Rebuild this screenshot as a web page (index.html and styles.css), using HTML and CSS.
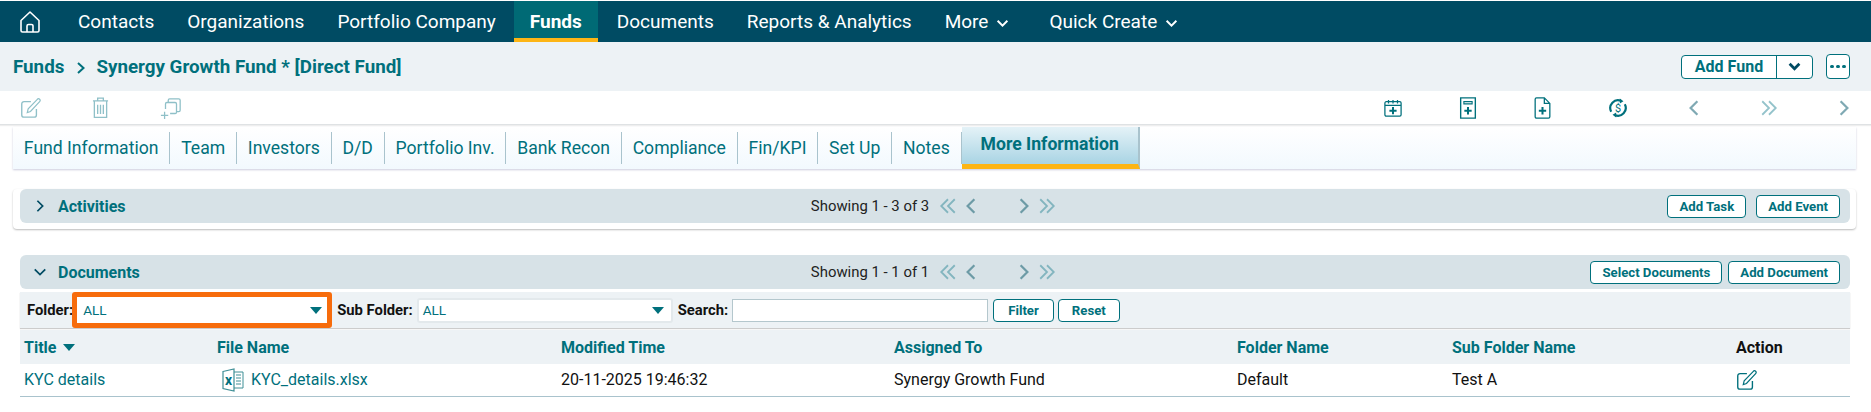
FILE: index.html
```html
<!DOCTYPE html>
<html lang="en">
<head>
<meta charset="utf-8">
<title>Synergy Growth Fund</title>
<link rel="stylesheet" href="styles.css">
</head>
<body>
<svg class="defs" width="0" height="0">
  <symbol id="i-edit" viewBox="0 0 24 24"><path d="M13 5H5.500A2.500 2.500 0 0 0 3 7.500V19.500A2.500 2.500 0 0 0 5.500 22H16.500A2.500 2.500 0 0 0 19 19.500V13" fill="none" stroke="currentColor" stroke-width="1.500"/><path d="M9 17l1-4L20 2.500a1.700 1.700 0 0 1 2.500 2.500L12.500 15.800z" fill="none" stroke="currentColor" stroke-width="1.300"/></symbol>
  <symbol id="i-left" viewBox="0 0 16 16"><path d="M11 2L5 8l6 6" fill="none" stroke="currentColor" stroke-width="2"/></symbol>
  <symbol id="i-right" viewBox="0 0 16 16"><path d="M5 2l6 6-6 6" fill="none" stroke="currentColor" stroke-width="2"/></symbol>
  <symbol id="i-dleft" viewBox="0 0 16 16"><path d="M8 2L2 8l6 6M14 2L8 8l6 6" fill="none" stroke="currentColor" stroke-width="1.600"/></symbol>
  <symbol id="i-dright" viewBox="0 0 16 16"><path d="M2 2l6 6-6 6M8 2l6 6-6 6" fill="none" stroke="currentColor" stroke-width="1.600"/></symbol>
  <symbol id="i-down" viewBox="0 0 12 8"><path d="M1.500 1.500L6 6l4.500-4.500" fill="none" stroke="currentColor" stroke-width="1.800"/></symbol>
</svg>

<nav class="nav">
  <a class="nav-home">
    <svg width="22" height="24" viewBox="0 0 22 24"><path d="M11 2L2 10.500V20.500a1.500 1.500 0 0 0 1.500 1.500h15a1.500 1.500 0 0 0 1.500-1.500V10.500z" fill="none" stroke="#fff" stroke-width="1.600" stroke-linejoin="round"/><path d="M8 22v-6a1.500 1.500 0 0 1 1.500-1.500h3A1.500 1.500 0 0 1 14 16v6" fill="none" stroke="#fff" stroke-width="1.600"/></svg>
  </a>
  <a class="nav-item">Contacts</a>
  <a class="nav-item">Organizations</a>
  <a class="nav-item">Portfolio Company</a>
  <a class="nav-item nav-active">Funds</a>
  <a class="nav-item">Documents</a>
  <a class="nav-item">Reports &amp; Analytics</a>
  <a class="nav-item">More <svg class="nav-caret" width="13" height="9"><use href="#i-down"/></svg></a>
  <a class="nav-item nav-quick">Quick Create <svg class="nav-caret" width="13" height="9"><use href="#i-down"/></svg></a>
</nav>

<header class="crumbs">
  <span class="crumb">Funds</span>
  <svg class="crumb-sep" width="10" height="14" viewBox="0 0 10 14"><path d="M2 2l5.500 5L2 12" fill="none" stroke="currentColor" stroke-width="2"/></svg>
  <span class="crumb">Synergy Growth Fund * [Direct Fund]</span>
  <div class="crumb-actions">
    <div class="split">
      <span class="split-main">Add Fund</span>
      <span class="split-caret"><svg width="13" height="9" viewBox="0 0 12 8"><path d="M1.500 1.500L6 6l4.500-4.500" fill="none" stroke="currentColor" stroke-width="2.600"/></svg></span>
    </div>
    <span class="dots"><i></i><i></i><i></i></span>
  </div>
</header>

<div class="toolbar">
  <div class="tools-left">
    <svg class="tool" width="22" height="22"><use href="#i-edit"/></svg>
    <svg class="tool" width="17" height="23" viewBox="0 0 18 24"><path d="M1 5h16M6 5V2h6v3M2.500 5.500V22.500h13V5.500M6 9v10M9 9v10M12 9v10" fill="none" stroke="currentColor" stroke-width="1.400"/></svg>
    <svg class="tool" width="22" height="22" viewBox="0 0 24 24"><path d="M9 6V3.500A1.500 1.500 0 0 1 10.500 2h10A1.500 1.500 0 0 1 22 3.500v11a1.500 1.500 0 0 1-1.500 1.500H18" fill="none" stroke="currentColor" stroke-width="1.400"/><path d="M6 13V7.500A1.500 1.500 0 0 1 7.500 6h9A1.500 1.500 0 0 1 18 7.500v9a1.500 1.500 0 0 1-1.500 1.500H11M5 16v8M1 20h8" fill="none" stroke="currentColor" stroke-width="1.400"/></svg>
  </div>
  <div class="tools-right">
    <svg width="18" height="18" viewBox="0 0 20 20"><path d="M1 4.500A1.500 1.500 0 0 1 2.500 3h15A1.500 1.500 0 0 1 19 4.500v13a1.500 1.500 0 0 1-1.500 1.500h-15A1.500 1.500 0 0 1 1 17.500zM1 7h18M5 1v4M10 1v4M15 1v4" fill="none" stroke="currentColor" stroke-width="1.400"/><path d="M10 9v8M6 13h8" fill="none" stroke="currentColor" stroke-width="2.200"/></svg>
    <svg width="18" height="22" viewBox="0 0 18 24"><path d="M1 1h16v22H1z" fill="none" stroke="currentColor" stroke-width="1.500"/><path d="M4.500 5h9v2.500h-9z" fill="none" stroke="currentColor" stroke-width="1.200"/><path d="M9 11v8M5 15h8" fill="none" stroke="currentColor" stroke-width="2.200"/></svg>
    <svg width="17" height="22" viewBox="0 0 18 24"><path d="M1 2.500A1.500 1.500 0 0 1 2.500 1H11l6 6v14.500a1.500 1.500 0 0 1-1.500 1.500h-13A1.500 1.500 0 0 1 1 21.500zM11 1v6h6" fill="none" stroke="currentColor" stroke-width="1.400"/><path d="M9 11v8M5 15h8" fill="none" stroke="currentColor" stroke-width="2.200"/></svg>
    <svg width="20" height="20" viewBox="0 0 21 22"><path d="M3 15A8.500 8.500 0 0 1 14 3.300M18 7A8.500 8.500 0 0 1 7 18.700" fill="none" stroke="currentColor" stroke-width="2.400"/><path d="M12.500 0.500l4 3-4 2.500zM8.500 21.500l-4-3 4-2.500z" fill="currentColor"/><text class="dollar" x="10.500" y="15.500" text-anchor="middle">$</text></svg>
    <svg class="tool-nav" width="18" height="18"><use href="#i-left"/></svg>
    <svg class="tool-nav tool-nav-light" width="18" height="18"><use href="#i-dright"/></svg>
    <svg class="tool-nav" width="18" height="18"><use href="#i-right"/></svg>
  </div>
</div>

<main class="content">
  <div class="tabs">
    <a class="tab">Fund Information</a>
    <a class="tab">Team</a>
    <a class="tab">Investors</a>
    <a class="tab">D/D</a>
    <a class="tab">Portfolio Inv.</a>
    <a class="tab">Bank Recon</a>
    <a class="tab">Compliance</a>
    <a class="tab">Fin/KPI</a>
    <a class="tab">Set Up</a>
    <a class="tab">Notes</a>
    <a class="tab tab-active">More Information</a>
  </div>

  <section class="card card-activities">
    <div class="panel-head">
      <div class="panel-title">
        <svg class="panel-chev" width="14" height="14"><use href="#i-right"/></svg>
        <span>Activities</span>
      </div>
      <div class="pager">
        <span class="pager-text">Showing 1 - 3 of 3</span>
        <svg class="pg-dbl" width="18" height="18"><use href="#i-dleft"/></svg>
        <svg class="pg-one" width="18" height="18"><use href="#i-left"/></svg>
        <svg class="pg-one pg-next" width="18" height="18"><use href="#i-right"/></svg>
        <svg class="pg-dbl" width="18" height="18"><use href="#i-dright"/></svg>
      </div>
      <div class="panel-actions panel-actions-wide">
        <a class="btn">Add Task</a>
        <a class="btn">Add Event</a>
      </div>
    </div>
  </section>

  <section class="card card-docs">
    <div class="panel-head">
      <div class="panel-title">
        <svg class="panel-chev" width="14" height="14" viewBox="0 0 16 16"><path d="M2 5l6 6 6-6" fill="none" stroke="currentColor" stroke-width="2"/></svg>
        <span>Documents</span>
      </div>
      <div class="pager">
        <span class="pager-text">Showing 1 - 1 of 1</span>
        <svg class="pg-dbl" width="18" height="18"><use href="#i-dleft"/></svg>
        <svg class="pg-one" width="18" height="18"><use href="#i-left"/></svg>
        <svg class="pg-one pg-next" width="18" height="18"><use href="#i-right"/></svg>
        <svg class="pg-dbl" width="18" height="18"><use href="#i-dright"/></svg>
      </div>
      <div class="panel-actions">
        <a class="btn">Select Documents</a>
        <a class="btn">Add Document</a>
      </div>
    </div>

    <div class="filters">
      <label class="f-label">Folder:</label>
      <div class="select select-hl"><span>ALL</span><i class="tri"></i></div>
      <label class="f-label f-sub">Sub Folder:</label>
      <div class="select select-sub"><span>ALL</span><i class="tri"></i></div>
      <label class="f-label f-search">Search:</label>
      <div class="search"></div>
      <a class="btn btn-filter">Filter</a>
      <a class="btn btn-reset">Reset</a>
    </div>

    <div class="grid grid-head">
      <div class="cell">Title <i class="tri tri-sort"></i></div>
      <div class="cell">File Name</div>
      <div class="cell">Modified Time</div>
      <div class="cell">Assigned To</div>
      <div class="cell">Folder Name</div>
      <div class="cell">Sub Folder Name</div>
      <div class="cell cell-action">Action</div>
    </div>
    <div class="grid grid-row">
      <div class="cell cell-link">KYC details</div>
      <div class="cell cell-link cell-file">
        <svg class="xl" width="22" height="24" viewBox="0 0 22 24"><path d="M1 3.500L12 1v22L1 20.500z" fill="none" stroke="#3f8f96" stroke-width="1.200"/><path d="M12 4h9v16h-9M14 7h5M14 10h5M14 13h5M14 16h5" fill="none" stroke="#3f8f96" stroke-width="1"/><text class="xl-x" x="6.500" y="16.500" text-anchor="middle">x</text></svg>
        <span>KYC_details.xlsx</span>
      </div>
      <div class="cell">20-11-2025 19:46:32</div>
      <div class="cell">Synergy Growth Fund</div>
      <div class="cell">Default</div>
      <div class="cell">Test A</div>
      <div class="cell cell-edit"><svg class="row-edit" width="22" height="22"><use href="#i-edit"/></svg></div>
    </div>
  </section>
</main>
</body>
</html>
```

FILE: styles.css
```css
* { box-sizing: border-box; }
html, body { margin: 0; padding: 0; }
body {
  width: 1871px;
  height: 412px;
  overflow: hidden;
  background: #fff;
  font-family: Roboto, "Liberation Sans", sans-serif;
  color: #111;
}
.defs { display: block; height: 0; }

.nav {
  display: flex;
  align-items: stretch;
  height: 41px;
  margin-top: 1px;
  background: #004b63;
  color: #fff;
  font-size: 19px;
}
.nav-home { display: flex; align-items: center; padding: 0 0 0 19px; width: 78px; }
.nav-item { display: flex; align-items: center; gap: 8px; margin-right: 33px; white-space: nowrap; }
.nav-active {
  margin: 0 19px 0 -15px;
  padding: 4px 16px 0;
  background: #006a75;
  border-bottom: 4px solid #fdb515;
  font-weight: 700;
}
.nav-quick { margin-left: 7px; }
.nav-caret { margin-top: 3px; }

.crumbs {
  display: flex;
  align-items: center;
  height: 49px;
  padding: 0 21px 0 13px;
  background: #edf2f5;
  color: #00707c;
}
.crumb { font-size: 18.800px; font-weight: 700; }
.crumb-sep { margin: 3px 10px 0 12px; }
.crumb-actions { display: flex; align-items: center; gap: 13px; margin-left: auto; }
.split {
  display: flex;
  height: 24px;
  background: #fff;
  border: 1px solid #00707c;
  border-radius: 4px;
  font-size: 16px;
  font-weight: 700;
}
.split-main { display: flex; align-items: center; width: 94px; justify-content: center; }
.split-caret {
  display: flex;
  align-items: center;
  justify-content: center;
  width: 36px;
  border-left: 1px solid #00707c;
  color: #004b63;
}
.dots {
  display: flex;
  align-items: center;
  justify-content: center;
  gap: 2.500px;
  width: 24px;
  height: 25px;
  border: 1px solid #00707c;
  border-radius: 4px;
  background: #fff;
}
.dots i { width: 3.500px; height: 3.500px; border-radius: 50%; background: #00707c; }

.toolbar {
  display: flex;
  justify-content: space-between;
  align-items: center;
  height: 34px;
  border-bottom: 1px solid #dfe2e4;
  box-shadow: 0 1px 1px #eee;
}
.tools-left { display: flex; align-items: center; gap: 51px; padding-left: 19px; color: #8fc0c8; }
.tools-right { display: flex; align-items: center; gap: 57px; padding-right: 18px; color: #00707c; }
.tool-nav { color: #7fa9b3; }
.tool-nav-light { color: #94c3cb; }
.dollar { font-size: 12px; font-family: Roboto, sans-serif; fill: currentColor; }

.content { padding: 0 15px 0 13px; }
.tabs {
  display: flex;
  align-items: center;
  height: 42px;
  margin-top: 2px;
  background: linear-gradient(#fff, #f2f9fe);
  box-shadow: 0 1px 2px #ccd;
  font-size: 17.600px;
  color: #00707c;
}
.tab {
  display: flex;
  align-items: center;
  height: 32px;
  padding: 0 10.850px;
  border-right: 1px solid #a9c3cd;
  white-space: nowrap;
}
.tab-active {
  align-self: stretch;
  height: auto;
  padding: 0 19px 4px;
  background: linear-gradient(#e4f2f7, #a9d4e4);
  border-bottom: 5px solid #fdb515;
  border-right: 2px solid #a9c3cd;
  font-weight: 700;
}

.card { margin-top: 20px; padding: 0 6px 6px 7px; }
.card-activities {
  border-radius: 4px;
  box-shadow: 0 1px 2px #bbb;
}
.card-docs { margin-top: 26px; padding-bottom: 0; }
.panel-head {
  display: grid;
  grid-template-columns: 1fr auto 1fr;
  align-items: center;
  height: 34px;
  padding: 0 10px 0 13px;
  background: #d7e2e7;
  border-radius: 6px;
}
.panel-title { display: flex; align-items: center; gap: 11px; font-size: 16px; font-weight: 700; color: #00707c; }
.panel-chev { color: #004b63; }
.pager { display: flex; align-items: center; margin-right: 6px; font-size: 14.900px; color: #222; }
.pager-text { margin-right: 10px; }
.pg-dbl { color: #83b5bf; margin-left: 5px; }
.pager-text + .pg-dbl { margin-left: 0; }
.pg-one { color: #6d9ba6; margin-left: 5px; }
.pg-next { margin-left: 35px; }
.panel-actions { display: flex; justify-content: flex-end; gap: 6px; }
.panel-actions-wide { gap: 10px; }
.btn {
  display: inline-flex;
  align-items: center;
  height: 23px;
  padding: 0 11px;
  background: #fff;
  border: 1px solid #00707c;
  border-radius: 4px;
  font-size: 13.200px;
  font-weight: 700;
  color: #00707c;
  white-space: nowrap;
}

.filters {
  display: flex;
  align-items: center;
  height: 36px;
  margin-top: 3px;
  padding-left: 7px;
  background: #edf2f5;
  box-shadow: 0 1px 1px #ccc;
  font-size: 14.800px;
}
.f-label { font-weight: 700; color: #111; }
.select {
  display: flex;
  align-items: center;
  justify-content: space-between;
  height: 25px;
  background: #fff;
  font-size: 13.500px;
  color: #00707c;
}
.select-hl {
  flex: none;
  width: 260px;
  height: 36px;
  margin-left: -1px;
  padding: 0 5px 0 6px;
  border: 5px solid #f76c0c;
  border-radius: 3px;
}
.select-sub { flex: none; width: 256px; margin-left: 4px; padding: 0 7px 0 4px; border: 2px solid #e3e9ec; border-radius: 3px; }
.f-sub { margin-left: 5px; }
.f-search { margin-left: 5px; }
.tri {
  width: 0;
  height: 0;
  border-left: 6px solid transparent;
  border-right: 6px solid transparent;
  border-top: 7px solid #00707c;
}
.search {
  flex: none;
  width: 256px;
  height: 23px;
  margin-left: 4px;
  background: #fff;
  border: 1px solid #b4c7cd;
}
.btn-filter { margin-left: 5px; padding: 0 14px; }
.btn-reset { margin-left: 4px; padding: 0 13px; }

.grid {
  display: grid;
  grid-template-columns: 193px 344px 333px 343px 215px 284px 118px;
  align-items: center;
  font-size: 16px;
}
.grid-head {
  height: 34px;
  margin-top: 2px;
  background: #edf2f5;
  font-weight: 700;
  color: #00707c;
}
.grid-row {
  height: 33px;
  padding-bottom: 1px;
  border-bottom: 1px solid #a9c3cd;
}
.cell { padding-left: 4px; white-space: nowrap; }
.cell-action { color: #111; }
.cell-link { color: #00707c; }
.cell-file { display: flex; align-items: center; gap: 7px; padding-left: 9px; }
.tri-sort { display: inline-block; margin-left: 3px; vertical-align: 2px; }
.xl-x { font-size: 14px; font-weight: 700; fill: #00707c; font-family: Roboto, sans-serif; }
.row-edit { color: #00707c; display: block; }
.cell-edit { padding-left: 3px; }
```
